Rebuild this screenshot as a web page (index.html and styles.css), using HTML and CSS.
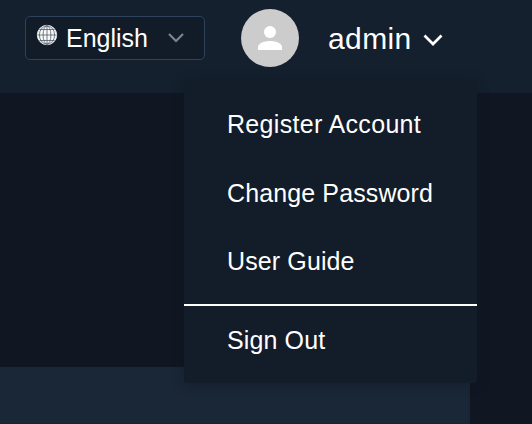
FILE: index.html
```html
<!DOCTYPE html>
<html lang="en">
<head>
<meta charset="utf-8">
<title>Account menu</title>
<link rel="stylesheet" href="styles.css">
</head>
<body>
<header class="topbar">
  <button class="language">
    <svg class="globe" viewBox="0 0 22 22">
      <circle cx="11" cy="11" r="9.7" fill="#f8f8f8" stroke="#e4e7ea" stroke-width="1"/>
      <g fill="none" stroke="#4a5562" stroke-width="0.75">
        <ellipse cx="11" cy="11" rx="3.9" ry="9.2"/>
        <ellipse cx="11" cy="11" rx="7.6" ry="9.2"/>
        <path d="M11 1.5v19M1.5 11h19M3.5 5.5h15M3.5 16.5h15"/>
      </g>
    </svg>
    <span class="language-name">English</span>
    <svg class="language-arrow" viewBox="0 0 16 10"><path d="M1 1l7 7 7-7"/></svg>
  </button>
  <span class="avatar">
    <svg viewBox="0 0 24 24"><circle cx="12" cy="6" r="6"/><path d="M0 24v-3c0-4 7-6 12-6s12 2 12 6v3z"/></svg>
  </span>
  <button class="account">
    <span class="account-name">admin</span>
    <svg class="account-arrow" viewBox="0 0 20 12"><path d="M1.5 1.5L10 10l8.5-8.5"/></svg>
  </button>
  <nav class="menu">
    <a class="item register">Register Account</a>
    <a class="item">Change Password</a>
    <a class="item">User Guide</a>
    <a class="item sign-out">Sign Out</a>
  </nav>
</header>
<main class="content"><section class="panel"></section></main>
</body>
</html>
```
FILE: styles.css
```css
* { box-sizing: border-box; }
body {
  margin: 0;
  height: 424px;
  overflow: hidden;
  display: flex;
  flex-direction: column;
  background: #101622;
  color: #fff;
  font-family: "Liberation Sans", Arial, sans-serif;
}
button { margin: 0; padding: 0; border: 0; background: none; color: inherit; font: inherit; }
svg { display: block; flex: none; }
.topbar {
  position: relative;
  flex: none;
  display: flex;
  align-items: flex-start;
  height: 93px;
  padding: 9px 0 0 25px;
  background: #14202d;
}
.language {
  display: flex;
  align-items: center;
  width: 180px;
  height: 44px;
  margin-top: 7px;
  padding-left: 10px;
  border: 1px solid #2f425b;
  border-radius: 5px;
  background: #121b28;
  font-size: 25px;
}
.globe { width: 22px; height: 22px; margin-top: -6px; }
.language-name { width: 102px; margin-left: 8px; text-align: left; }
.language-arrow { width: 16px; height: 10px; margin-top: -1px; }
.language-arrow path { fill: none; stroke: #7d8592; stroke-width: 2.2; }
.avatar {
  display: flex;
  align-items: center;
  justify-content: center;
  width: 58px;
  height: 58px;
  margin-left: 36px;
  border-radius: 50%;
  background: #ccc;
}
.avatar svg { width: 24px; height: 24px; fill: #fff; }
.account {
  display: flex;
  align-items: center;
  height: 58px;
  margin-left: 29px;
  font-size: 30px;
}
.account-name { width: 83px; margin-top: 2px; letter-spacing: 0.4px; text-align: left; }
.account-arrow { width: 20px; height: 12px; margin: 3px 0 0 12px; }
.account-arrow path { fill: none; stroke: #fff; stroke-width: 2.7; }
.menu {
  position: absolute;
  z-index: 1;
  top: 80px;
  left: 184px;
  width: 293px;
  height: 303px;
  padding-top: 10px;
  border-radius: 3px;
  background: #131c29;
  box-shadow: 0 2px 12px rgba(16, 20, 34, 0.4);
  font-size: 25px;
  letter-spacing: 0.12px;
}
.item {
  display: block;
  height: 68.5px;
  padding-left: 43px;
  line-height: 68px;
  white-space: nowrap;
}
.register { letter-spacing: 0.32px; }
.sign-out {
  height: 72px;
  margin-top: 8px;
  border-top: 2px solid #fff;
}
.content { flex: 1; padding-top: 274px; }
.panel {
  width: 470px;
  height: 57px;
  border-right: 2px solid #182633;
  border-bottom: 1px solid #1b2236;
  background: #1a2736;
}
```
